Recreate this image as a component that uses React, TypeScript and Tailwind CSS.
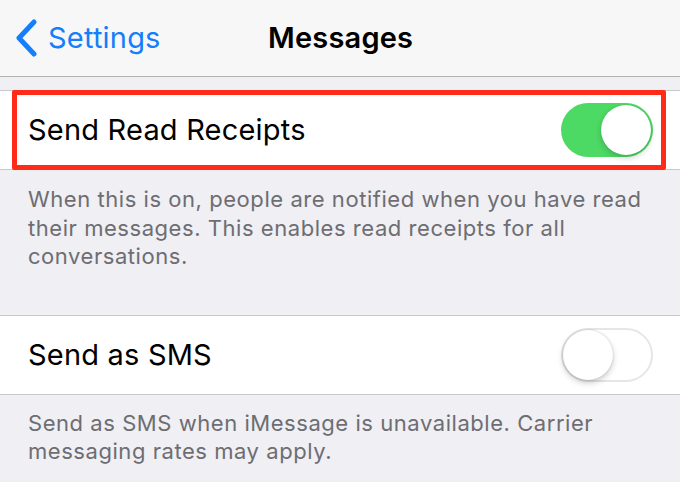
const Toggle = ({ on }: { on: boolean }) => (
  <div
    className={
      on
        ? 'relative w-[92px] h-[54px] rounded-full bg-[#4cd964]'
        : 'relative w-[92px] h-[54px] rounded-full bg-white border-[2px] border-[#e6e6e9]'
    }
  >
    <div
      className={
        on
          ? 'absolute top-[2px] right-[2px] w-[50px] h-[50px] rounded-full bg-white shadow-[0_3px_6px_rgba(0,0,0,0.18),0_0_1px_rgba(0,0,0,0.2)]'
          : 'absolute top-[0px] left-[0px] w-[50px] h-[50px] rounded-full bg-white shadow-[0_3px_6px_rgba(0,0,0,0.2),0_0_2px_rgba(0,0,0,0.2)]'
      }
    />
  </div>
);

const Row = ({ label, on, marked }: { label: string; on: boolean; marked?: boolean }) => (
  <div className="relative flex items-center justify-between h-[80px] pl-[28px] pr-[27px] bg-white border-y border-[#c8c7cc]">
    <span className="text-[29px] tracking-[0.2px] text-black">{label}</span>
    <Toggle on={on} />
    {marked && (
      <div className="absolute top-[-1px] bottom-[-1px] left-[12px] right-[14px] border-[5px] border-[#ff2a17] rounded-[2px]" />
    )}
  </div>
);

const Footer = ({ children }: { children: string }) => (
  <p className="px-[28px] text-[22px] leading-[28.5px] tracking-[0.55px] text-[#6d6d72]">{children}</p>
);

export default function App() {
  return (
    <div className="w-[680px] h-[482px] overflow-hidden bg-[#efeff4] font-['Inter',sans-serif]">
      <header className="relative flex items-center h-[77px] bg-[#f7f7f7] border-b border-[#b2b2b2]">
        <div className="flex items-center gap-[10px] pl-[14px] text-[#147efb]">
          <svg width="24" height="38" viewBox="0 0 24 38">
            <path d="M20 3 L5 19 L20 35" fill="none" stroke="#147efb" strokeWidth="5" strokeLinecap="round" strokeLinejoin="round" />
          </svg>
          <span className="text-[29px] tracking-[0.2px]">Settings</span>
        </div>
        <h1 className="absolute left-[268px] text-[29px] font-semibold tracking-[0.2px] text-black">Messages</h1>
      </header>

      <div className="pt-[13px]">
        <Row label="Send Read Receipts" on marked />
        <div className="pt-[15px] pb-[44px]">
          <Footer>
            When this is on, people are notified when you have read their messages. This enables read receipts for all conversations.
          </Footer>
        </div>
        <Row label="Send as SMS" on={false} />
        <div className="pt-[14px]">
          <Footer>Send as SMS when iMessage is unavailable. Carrier messaging rates may apply.</Footer>
        </div>
      </div>
    </div>
  );
}
